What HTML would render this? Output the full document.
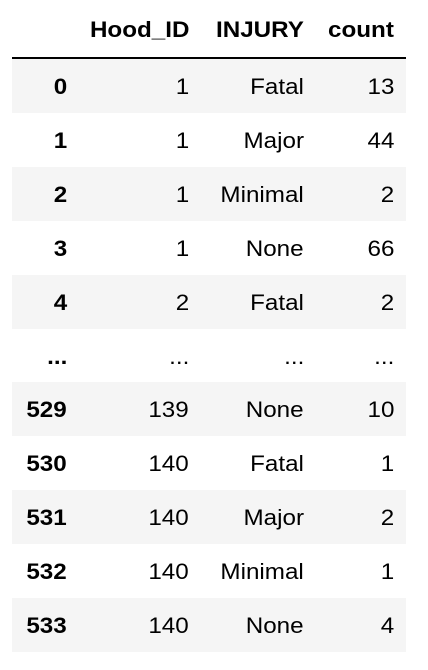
<!DOCTYPE html>
<html><head><style>
body{margin:0;background:#fff;width:428px;height:670px;overflow:hidden;font-family:"Liberation Sans",Arial,sans-serif;color:#000}
.row{position:absolute;left:12px;width:394px;height:54px}
.g{background:#f5f5f5}
.c{position:absolute;top:1px;height:100%;line-height:54px;font-size:22px;white-space:nowrap;transform:scaleX(1.1);transform-origin:right center;text-align:right}
.b{font-weight:bold}
</style></head><body>
<div class="row" style="top:2px"><div class="c b" style="right:217px">Hood_ID</div><div class="c b" style="right:102px">INJURY</div><div class="c b" style="right:12px">count</div></div>
<div style="position:absolute;left:12px;top:57px;width:394px;height:2px;background:#000"></div>
<div id="t"></div>
<script>
var d=[["0","1","Fatal","13"],["1","1","Major","44"],["2","1","Minimal","2"],["3","1","None","66"],["4","2","Fatal","2"],["...","...","...","..."],["529","139","None","10"],["530","140","Fatal","1"],["531","140","Major","2"],["532","140","Minimal","1"],["533","140","None","4"]];
var h="";
d.forEach(function(r,i){
h+='<div class="row'+(i%2==0?' g':'')+'" style="top:'+(59+i*53.9)+'px"><div class="c b" style="right:339px">'+r[0]+'</div><div class="c" style="right:217px">'+r[1]+'</div><div class="c" style="right:102px">'+r[2]+'</div><div class="c" style="right:12px">'+r[3]+'</div></div>';
});
document.getElementById("t").innerHTML=h;
</script>
</body></html>
